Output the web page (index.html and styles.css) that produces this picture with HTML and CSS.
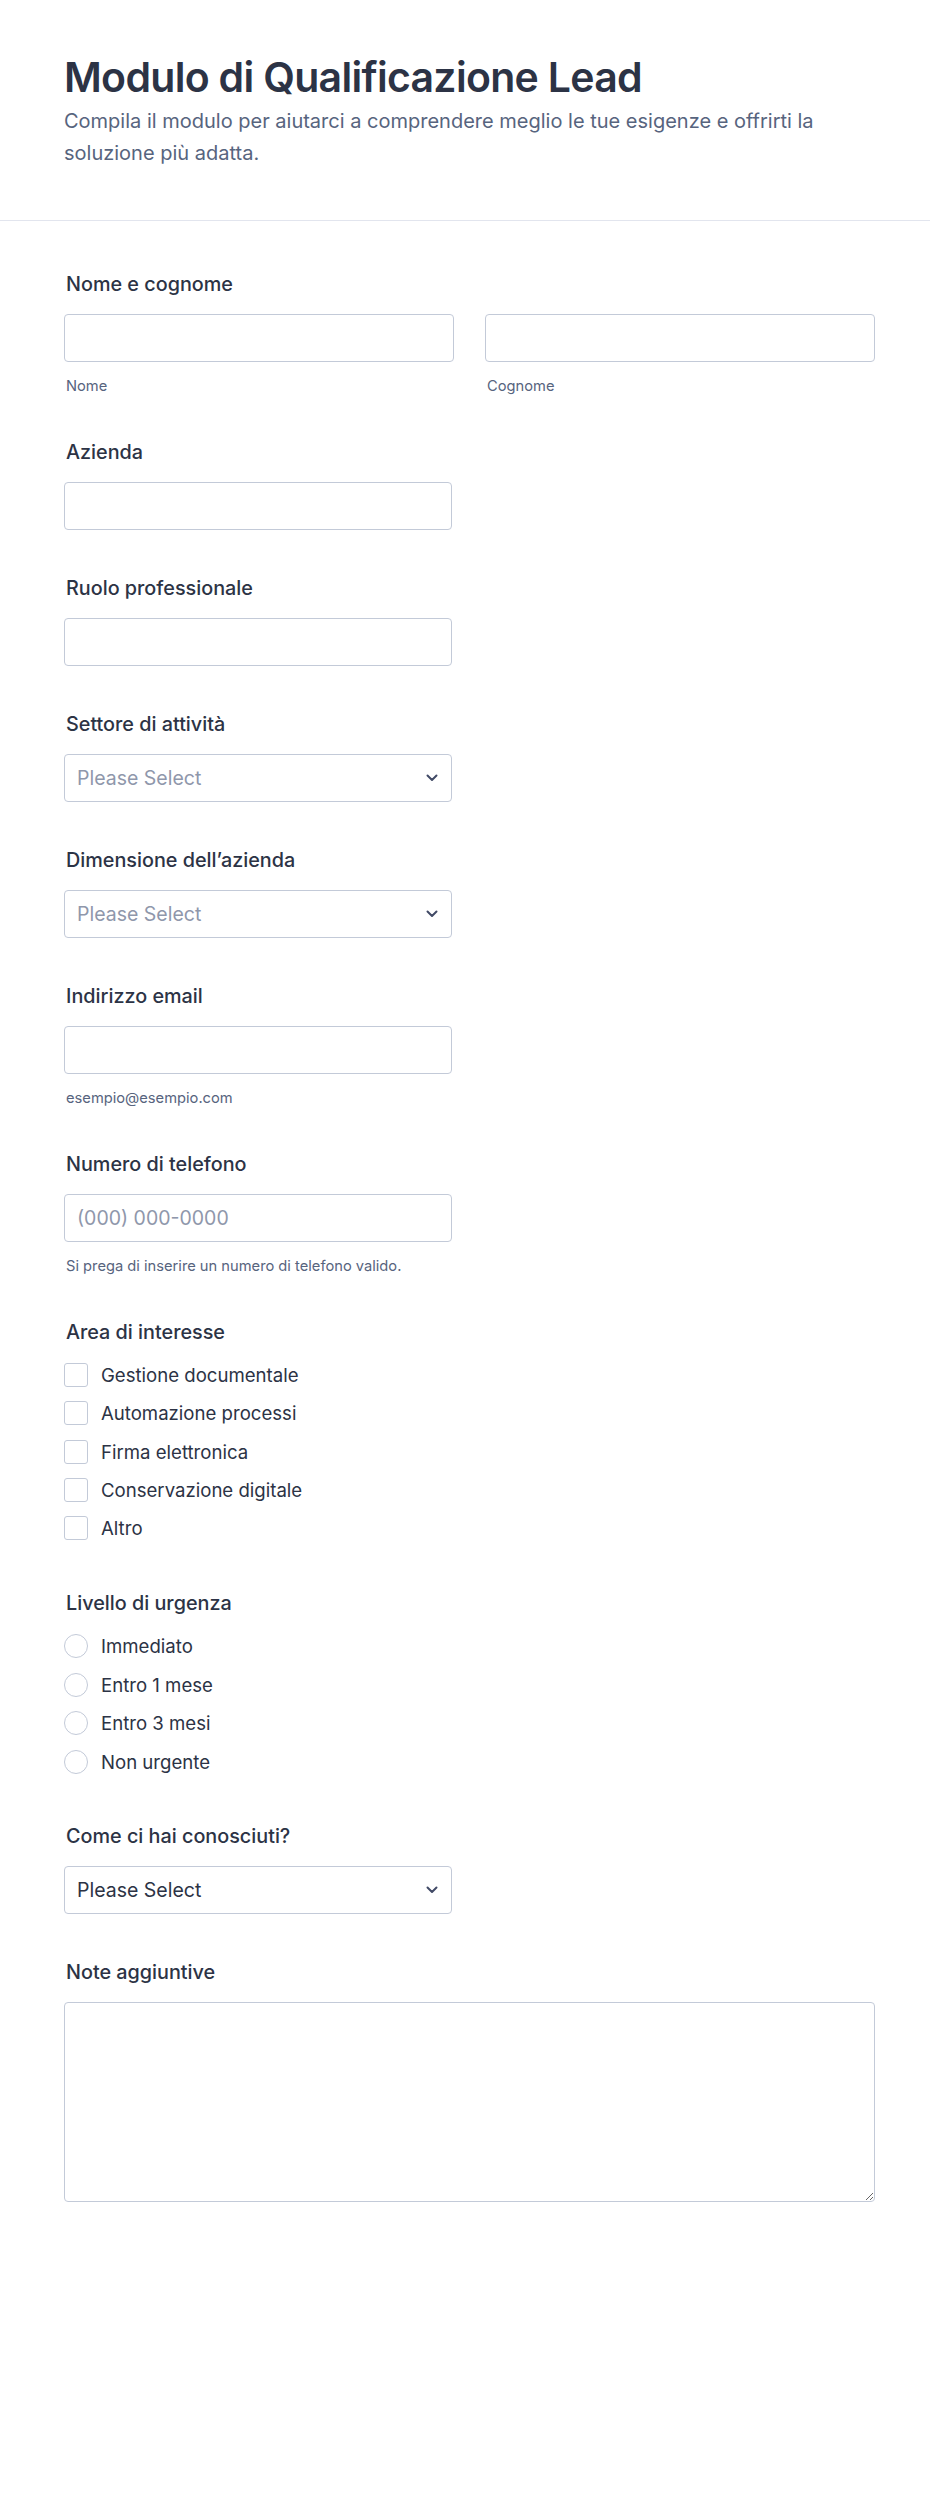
FILE: index.html
```html
<!DOCTYPE html>
<html lang="it">
<head>
<meta charset="utf-8">
<title>Modulo di Qualificazione Lead</title>
<link rel="stylesheet" href="styles.css">
</head>
<body>
<header class="form-header">
  <h1 class="form-title">Modulo di Qualificazione Lead</h1>
  <p class="form-desc">Compila il modulo per aiutarci a comprendere meglio le tue esigenze e offrirti la soluzione più adatta.</p>
</header>
<main class="form-body">
  <div class="field">
    <label class="field-label">Nome e cognome</label>
    <div class="name-row">
      <div class="name-col">
        <input class="text-input full" type="text">
        <span class="sublabel">Nome</span>
      </div>
      <div class="name-col">
        <input class="text-input full" type="text">
        <span class="sublabel">Cognome</span>
      </div>
    </div>
  </div>

  <div class="field">
    <label class="field-label">Azienda</label>
    <input class="text-input" type="text">
  </div>

  <div class="field">
    <label class="field-label">Ruolo professionale</label>
    <input class="text-input" type="text">
  </div>

  <div class="field">
    <label class="field-label">Settore di attività</label>
    <div class="select-wrap">
      <select class="select placeholder"><option>Please Select</option></select>
      <svg class="chevron" viewBox="0 0 12 8" width="12" height="8"><path d="M1.5 1.5 L6 6 L10.5 1.5" fill="none" stroke="#414a66" stroke-width="2" stroke-linecap="round" stroke-linejoin="round"/></svg>
    </div>
  </div>

  <div class="field">
    <label class="field-label">Dimensione dell’azienda</label>
    <div class="select-wrap">
      <select class="select placeholder"><option>Please Select</option></select>
      <svg class="chevron" viewBox="0 0 12 8" width="12" height="8"><path d="M1.5 1.5 L6 6 L10.5 1.5" fill="none" stroke="#414a66" stroke-width="2" stroke-linecap="round" stroke-linejoin="round"/></svg>
    </div>
  </div>

  <div class="field">
    <label class="field-label">Indirizzo email</label>
    <input class="text-input" type="email">
    <span class="sublabel">esempio@esempio.com</span>
  </div>

  <div class="field">
    <label class="field-label">Numero di telefono</label>
    <input class="text-input" type="tel" placeholder="(000) 000-0000">
    <span class="sublabel">Si prega di inserire un numero di telefono valido.</span>
  </div>

  <div class="field">
    <label class="field-label">Area di interesse</label>
    <div class="option-list checks">
      <label class="option"><span class="box"></span><span class="option-text">Gestione documentale</span></label>
      <label class="option"><span class="box"></span><span class="option-text">Automazione processi</span></label>
      <label class="option"><span class="box"></span><span class="option-text">Firma elettronica</span></label>
      <label class="option"><span class="box"></span><span class="option-text">Conservazione digitale</span></label>
      <label class="option"><span class="box"></span><span class="option-text">Altro</span></label>
    </div>
  </div>

  <div class="field">
    <label class="field-label">Livello di urgenza</label>
    <div class="option-list radios">
      <label class="option"><span class="circle"></span><span class="option-text">Immediato</span></label>
      <label class="option"><span class="circle"></span><span class="option-text">Entro 1 mese</span></label>
      <label class="option"><span class="circle"></span><span class="option-text">Entro 3 mesi</span></label>
      <label class="option"><span class="circle"></span><span class="option-text">Non urgente</span></label>
    </div>
  </div>

  <div class="field">
    <label class="field-label">Come ci hai conosciuti?</label>
    <div class="select-wrap">
      <select class="select"><option>Please Select</option></select>
      <svg class="chevron" viewBox="0 0 12 8" width="12" height="8"><path d="M1.5 1.5 L6 6 L10.5 1.5" fill="none" stroke="#414a66" stroke-width="2" stroke-linecap="round" stroke-linejoin="round"/></svg>
    </div>
  </div>

  <div class="field">
    <label class="field-label">Note aggiuntive</label>
    <textarea class="textarea"></textarea>
  </div>
</main>
</body>
</html>
```
FILE: styles.css
```css
* {
  box-sizing: border-box;
}

body {
  margin: 0;
  background: #ffffff;
  font-family: Inter, "Noto Sans", "Liberation Sans", sans-serif;
  color: #2c3345;
}

.form-header {
  padding: 53px 64px 51px;
  border-bottom: 1px solid #e2e5ee;
}

.form-title {
  margin: 0;
  font-size: 41px;
  line-height: 48px;
  font-weight: 600;
  letter-spacing: -0.7px;
  color: #2c3345;
}

.form-desc {
  margin: 5px 0 0;
  font-size: 20px;
  line-height: 31.5px;
  color: #57647e;
}

.form-body {
  padding: 50.5px 64px 0;
  display: flex;
  flex-direction: column;
  gap: 46px;
}

.field {
  display: flex;
  flex-direction: column;
  align-items: flex-start;
}

.field-label {
  display: block;
  font-size: 19.8px;
  line-height: 25px;
  font-weight: 500;
  margin-bottom: 17px;
  padding-left: 2px;
  color: #2c3345;
}

.name-row {
  display: grid;
  grid-template-columns: 390px 390px;
  column-gap: 31px;
}

.name-col {
  display: flex;
  flex-direction: column;
}

.text-input,
.select {
  width: 388px;
  height: 48px;
  border: 1px solid #c3cad8;
  border-radius: 4px;
  padding: 0 12px;
  font-family: inherit;
  font-size: 19.5px;
  color: #2c3345;
  background: #ffffff;
  outline: none;
}

.text-input.full {
  width: 100%;
}

.text-input::placeholder {
  color: #8f97ab;
}

.select {
  appearance: none;
  -webkit-appearance: none;
}

.select.placeholder {
  color: #8f97ab;
}

.select-wrap {
  position: relative;
  width: 388px;
}

.chevron {
  position: absolute;
  right: 14px;
  top: 20px;
  pointer-events: none;
}

.sublabel {
  display: block;
  margin-top: 16px;
  font-size: 14.7px;
  line-height: 16px;
  padding-left: 2px;
  color: #57647e;
}

.option-list {
  display: flex;
  flex-direction: column;
  margin-bottom: 3px;
}

.option-list.checks {
  gap: 11.25px;
}

.option-list.radios {
  gap: 11.5px;
}

.option {
  display: flex;
  align-items: center;
  gap: 13px;
  height: 27px;
  font-size: 18.6px;
  color: #2c3345;
}

.box,
.circle {
  width: 24px;
  height: 24px;
  border: 1px solid #c3cad8;
  background: #ffffff;
  flex: none;
}

.box {
  border-radius: 3px;
}

.circle {
  border-radius: 50%;
}

.textarea {
  width: 811px;
  height: 200px;
  border: 1px solid #c3cad8;
  border-radius: 4px;
  font-family: inherit;
  font-size: 18px;
  padding: 10px 12px;
  color: #2c3345;
  outline: none;
}
```
